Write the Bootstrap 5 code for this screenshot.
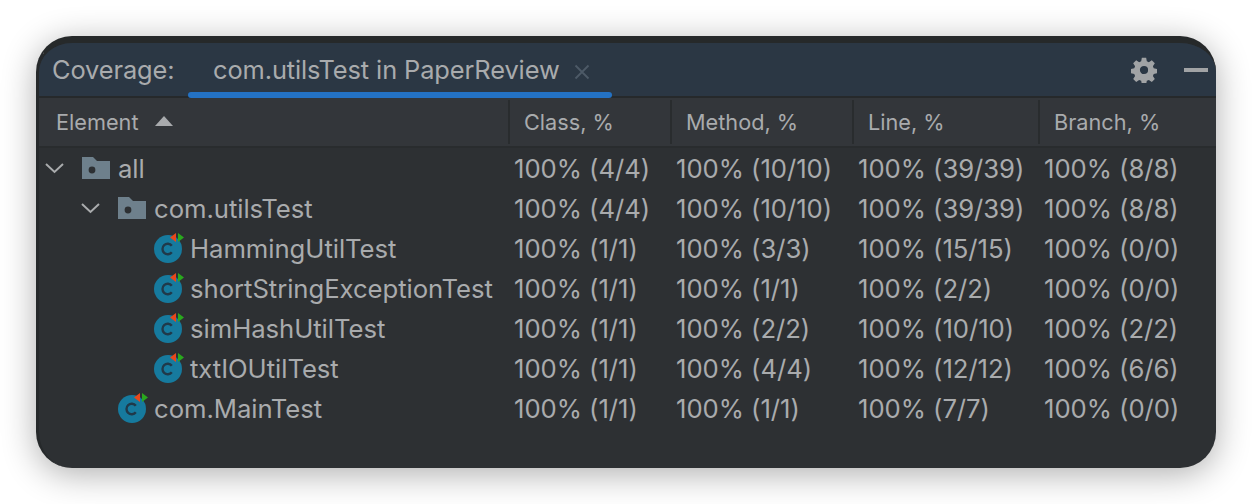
<!DOCTYPE html>
<html lang="en">
<head>
    <meta charset="UTF-8">
    <meta name="viewport" content="width=device-width, initial-scale=1.0">
    <title>Coverage</title>
    <link rel="stylesheet" href="https://cdn.jsdelivr.net/npm/bootstrap@5.3.0/dist/css/bootstrap.min.css">
    <style>
        html, body { height: 100%; }
        body {
            background: #fff;
            font-family: "Inter", "Liberation Sans", sans-serif;
            color: #a9abad;
            overflow: hidden;
        }
        .ide-window {
            width: 1180px;
            height: 432px;
            margin: 36px 0 0 36px;
            background: #2d3033;
            border-radius: 36px;
            border-left: 3px solid #26292b;
            border-top: 7px solid #26292a;
            box-shadow: 0 6px 34px rgba(0, 0, 0, .32);
            overflow: hidden;
        }
        .tool-bar {
            height: 53px;
            background: #2b3744;
            padding-left: 13px;
            padding-right: 8px;
            font-size: 25.4px;
            letter-spacing: -.1px;
        }
        .tool-label { width: 136px; margin-top: 2px; }
        .tool-tab {
            width: 424px;
            height: 100%;
            padding-left: 25px;
            padding-top: 2px;
            position: relative;
        }
        .tool-tab::after {
            content: "";
            position: absolute;
            left: 0;
            right: 0;
            bottom: -2px;
            height: 6px;
            border-radius: 3px;
            background: #2472c4;
        }
        .tab-close { margin-left: 14px; margin-top: 2px; }
        .tool-icons { margin-left: auto; gap: 27px; }
        .col-bar {
            height: 52px;
            background: #33363a;
            border-top: 2px solid #26292b;
            border-bottom: 2px solid #292c2e;
            font-size: 21.7px;
        }
        .col-cell {
            height: 100%;
            padding-left: 16px;
            padding-top: 1px;
            display: flex;
            align-items: center;
        }
        .col-cell + .col-cell { position: relative; }
        .col-cell + .col-cell::before {
            content: "";
            position: absolute;
            left: 0;
            top: 2px;
            bottom: 2px;
            width: 2px;
            background: #292c2e;
        }
        .w-element { width: 469px; padding-left: 17px; }
        .w-class { width: 162px; }
        .w-method { width: 182px; }
        .w-line { width: 186px; }
        .w-branch { width: 178px; }
        .sort-up { margin-left: 17px; margin-top: -3px; }
        .tree-row { height: 40px; font-size: 25.7px; letter-spacing: -.05px; white-space: nowrap; }
        .tree-row .col-cell { padding-left: 6px; padding-top: 1px; }
        .tree-row .col-cell::before { display: none; }
        .tree-row .w-element { padding-left: 5px; }
        .tree-row .lvl-1 { padding-left: 41px; }
        .tree-row .lvl-2 { padding-left: 115px; }
        .tree-row .lvl-1b { padding-left: 79px; }
        .twisty { width: 22px; margin-right: 16px; flex: none; margin-top: -3px; }
        .folder-icon { margin-right: 8px; flex: none; margin-top: -3px; }
        .class-icon { margin-right: 6px; flex: none; margin-top: -4px; }
        .tree-list { padding-top: 1px; }
    </style>
</head>
<body>
    <div class="ide-window">
        <div class="tool-bar d-flex align-items-center">
            <div class="tool-label">Coverage:</div>
            <div class="tool-tab d-flex align-items-center">
                com.utilsTest in PaperReview
                <svg class="tab-close" width="16" height="16" viewBox="0 0 16 16"><path d="M1.500 1.500l13 13M14.500 1.500l-13 13" stroke="#4d5a67" stroke-width="1.800" fill="none"/></svg>
            </div>
            <div class="tool-icons d-flex align-items-center">
                <svg width="26" height="26" viewBox="0 0 24 24"><path fill="#a1a3a5" fill-rule="evenodd" d="M10 .8h4l.6 3.200 1.900.8 2.700-1.800 2.800 2.800-1.800 2.700.8 1.900 3.200.6v4l-3.200.6-.8 1.900 1.800 2.700-2.800 2.800-2.700-1.800-1.900.8-.6 3.200h-4l-.6-3.200-1.900-.8-2.700 1.800-2.800-2.800 1.800-2.700-.8-1.900-3.200-.6v-4l3.200-.6.8-1.900-1.800-2.700 2.800-2.800 2.700 1.800 1.900-.8zM12 8.200a3.800 3.800 0 1 0 0 7.600 3.800 3.800 0 0 0 0-7.600z"/></svg>
                <svg width="24" height="6" viewBox="0 0 24 6"><rect y="1" width="24" height="4" fill="#a1a3a5"/></svg>
            </div>
        </div>
        <div class="col-bar d-flex">
            <div class="col-cell w-element">Element
                <svg class="sort-up" width="18" height="12" viewBox="0 0 18 12"><path d="M9 1l9 10H0z" fill="#a9abad"/></svg>
            </div>
            <div class="col-cell w-class">Class, %</div>
            <div class="col-cell w-method">Method, %</div>
            <div class="col-cell w-line">Line, %</div>
            <div class="col-cell w-branch">Branch, %</div>
        </div>
        <div class="tree-list" id="tree"></div>
    </div>

    <script>
        const folder = '<svg class="folder-icon" width="28" height="22" viewBox="0 0 28 22"><path d="M0 0h11l4 4h13v18H0z" fill="#6e808c"/><circle cx="10" cy="13" r="3.400" fill="#2d3033"/></svg>';
        const testClass = '<svg class="class-icon" width="30" height="30" viewBox="0 0 30 30"><circle cx="14" cy="16" r="14" fill="#167a9e"/><path d="M17.800 12.800a5.200 5.200 0 1 0 0 6.400" fill="none" stroke="#20394a" stroke-width="2.400"/><path d="M22 0v9l-6-4.500z" fill="#e8481c"/><path d="M24 0v9l6-4.500z" fill="#2aa81e"/></svg>';
        const chevron = '<svg class="twisty" width="22" height="12" viewBox="0 0 22 12"><path d="M2 2l8.500 8 8.500-8" fill="none" stroke="#a9abad" stroke-width="2"/></svg>';

        const rows = [
            ['all', 'lvl-0', true, '100% (4/4)', '100% (10/10)', '100% (39/39)', '100% (8/8)'],
            ['com.utilsTest', 'lvl-1', true, '100% (4/4)', '100% (10/10)', '100% (39/39)', '100% (8/8)'],
            ['HammingUtilTest', 'lvl-2', false, '100% (1/1)', '100% (3/3)', '100% (15/15)', '100% (0/0)'],
            ['shortStringExceptionTest', 'lvl-2', false, '100% (1/1)', '100% (1/1)', '100% (2/2)', '100% (0/0)'],
            ['simHashUtilTest', 'lvl-2', false, '100% (1/1)', '100% (2/2)', '100% (10/10)', '100% (2/2)'],
            ['txtIOUtilTest', 'lvl-2', false, '100% (1/1)', '100% (4/4)', '100% (12/12)', '100% (6/6)'],
            ['com.MainTest', 'lvl-1b', false, '100% (1/1)', '100% (1/1)', '100% (7/7)', '100% (0/0)']
        ];

        document.getElementById('tree').innerHTML = rows.map(r => `
            <div class="tree-row d-flex">
                <div class="col-cell w-element ${r[1]}">${r[2] ? chevron + folder : testClass}${r[0]}</div>
                <div class="col-cell w-class">${r[3]}</div>
                <div class="col-cell w-method">${r[4]}</div>
                <div class="col-cell w-line">${r[5]}</div>
                <div class="col-cell w-branch">${r[6]}</div>
            </div>`).join('');
    </script>
    <script src="https://cdn.jsdelivr.net/npm/bootstrap@5.3.0/dist/js/bootstrap.bundle.min.js"></script>
</body>
</html>
